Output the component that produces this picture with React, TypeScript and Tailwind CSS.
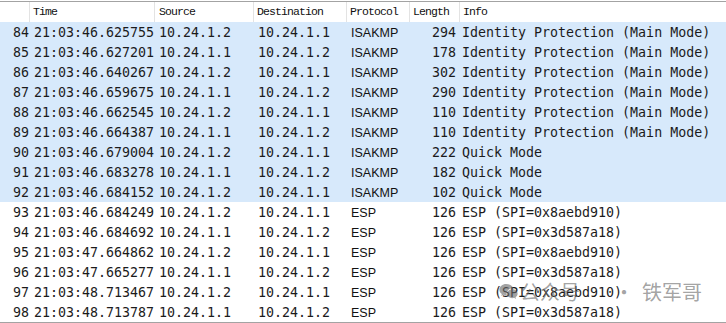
import React from "react";

const rows: [number, string, string, string, string, number, string][] = [
  [84, "21:03:46.625755", "10.24.1.2", "10.24.1.1", "ISAKMP", 294, "Identity Protection (Main Mode)"],
  [85, "21:03:46.627201", "10.24.1.1", "10.24.1.2", "ISAKMP", 178, "Identity Protection (Main Mode)"],
  [86, "21:03:46.640267", "10.24.1.2", "10.24.1.1", "ISAKMP", 302, "Identity Protection (Main Mode)"],
  [87, "21:03:46.659675", "10.24.1.1", "10.24.1.2", "ISAKMP", 290, "Identity Protection (Main Mode)"],
  [88, "21:03:46.662545", "10.24.1.2", "10.24.1.1", "ISAKMP", 110, "Identity Protection (Main Mode)"],
  [89, "21:03:46.664387", "10.24.1.1", "10.24.1.2", "ISAKMP", 110, "Identity Protection (Main Mode)"],
  [90, "21:03:46.679004", "10.24.1.2", "10.24.1.1", "ISAKMP", 222, "Quick Mode"],
  [91, "21:03:46.683278", "10.24.1.1", "10.24.1.2", "ISAKMP", 182, "Quick Mode"],
  [92, "21:03:46.684152", "10.24.1.2", "10.24.1.1", "ISAKMP", 102, "Quick Mode"],
  [93, "21:03:46.684249", "10.24.1.2", "10.24.1.1", "ESP", 126, "ESP (SPI=0x8aebd910)"],
  [94, "21:03:46.684692", "10.24.1.1", "10.24.1.2", "ESP", 126, "ESP (SPI=0x3d587a18)"],
  [95, "21:03:47.664862", "10.24.1.2", "10.24.1.1", "ESP", 126, "ESP (SPI=0x8aebd910)"],
  [96, "21:03:47.665277", "10.24.1.1", "10.24.1.2", "ESP", 126, "ESP (SPI=0x3d587a18)"],
  [97, "21:03:48.713467", "10.24.1.2", "10.24.1.1", "ESP", 126, "ESP (SPI=0x8aebd910)"],
  [98, "21:03:48.713787", "10.24.1.1", "10.24.1.2", "ESP", 126, "ESP (SPI=0x3d587a18)"],
];

const grid = "grid grid-cols-[30px_125px_99px_93px_63px_50px_1fr]";
const mono = "font-['DejaVu_Sans_Mono',monospace] text-[13.3px]";

export default function App() {
  return (
    <div className="relative w-[726px] h-[323px] bg-white overflow-hidden text-[#1b1b1b]">
      <div className="h-[1px]" />
      <div className="h-[1px] bg-[#a3a3a3]" />
      {/* header */}
      <div className={`${grid} h-[20px] bg-white font-['Liberation_Mono',monospace] text-[11.5px] tracking-[-0.9px] text-[#111]`}>
        <div className="border-r border-[#e3e3e3]" />
        <div className="border-r border-[#e3e3e3] pl-[3px] flex items-center">Time</div>
        <div className="border-r border-[#e3e3e3] pl-[4px] flex items-center">Source</div>
        <div className="border-r border-[#e3e3e3] pl-[3px] flex items-center">Destination</div>
        <div className="border-r border-[#e3e3e3] pl-[3px] flex items-center">Protocol</div>
        <div className="border-r border-[#e3e3e3] pl-[3px] flex items-center">Length</div>
        <div className="pl-[3px] flex items-center">Info</div>
      </div>
      {/* rows */}
      {rows.map((r) => {
        const isak = r[4] === "ISAKMP";
        return (
          <div
            key={r[0]}
            className={`${grid} h-[20px] pt-[1px] items-center ${isak ? "bg-[#d7e9fb]" : "bg-white"} ${mono} whitespace-pre`}
          >
            <div className="text-right pr-[1px]">{r[0]}</div>
            <div className="pl-[4px]">{r[1]}</div>
            <div className="pl-[4px]">{r[2]}</div>
            <div className="pl-[4px]">{r[3]}</div>
            <div className="pl-[4px] font-['Liberation_Sans',sans-serif] text-[12.5px] text-[#111]">{r[4]}</div>
            <div className="text-right pr-[4px]">{r[5]}</div>
            <div className="pl-[2px]">{r[6]}</div>
          </div>
        );
      })}
      <div className="h-[1px] bg-[#a3a3a3]" />
      {/* watermark */}
      <div className="absolute left-[499px] top-[282px] flex items-center text-[rgba(105,105,105,0.62)] font-['Noto_Sans_CJK_SC',sans-serif] text-[20px] leading-none">
        <svg width="19" height="18" viewBox="0 0 24 22" className="mr-[2px]">
          <path
            fill="rgba(105,105,105,0.62)"
            d="M9 1C4.3 1 0.5 4.2 0.5 8.1c0 2.2 1.2 4.2 3.1 5.5l-0.8 2.6 3-1.6c1 0.3 2.1 0.5 3.2 0.5 0.3 0 0.6 0 0.9 0-0.2-0.6-0.3-1.3-0.3-2 0-3.7 3.5-6.7 7.9-6.7h0.6C17.3 3.3 13.5 1 9 1z"
          />
          <path
            fill="rgba(105,105,105,0.62)"
            d="M16.8 7.6c-3.7 0-6.7 2.5-6.7 5.6s3 5.6 6.7 5.6c0.8 0 1.6-0.1 2.3-0.4l2.4 1.3-0.6-2.1c1.6-1 2.6-2.6 2.6-4.4 0-3.1-3-5.6-6.7-5.6z"
          />
        </svg>
        <span>公众号</span>
        <span className="ml-[34px] mr-[8px]">·</span>
        <span>铁军哥</span>
      </div>
    </div>
  );
}
